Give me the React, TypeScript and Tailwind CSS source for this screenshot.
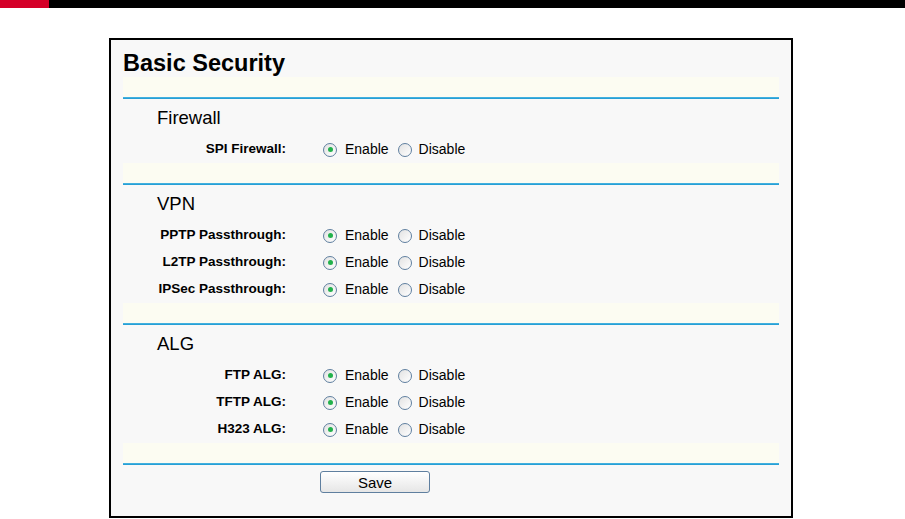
import React from 'react'

const sections = [
  { title: 'Firewall', rows: ['SPI Firewall:'] },
  { title: 'VPN', rows: ['PPTP Passthrough:', 'L2TP Passthrough:', 'IPSec Passthrough:'] },
  { title: 'ALG', rows: ['FTP ALG:', 'TFTP ALG:', 'H323 ALG:'] },
]

function Radio({ checked }: { checked?: boolean }) {
  return (
    <span className="w-[14px] h-[14px] rounded-full border border-[#5f7f9f] bg-gradient-to-br from-[#e2e2e2] to-white flex items-center justify-center shrink-0">
      {checked && <span className="w-[5px] h-[5px] rounded-full bg-[#22b14c]" />}
    </span>
  )
}

function Divider() {
  return (
    <div>
      <div className="h-[20px] bg-[#fcfcf2]" />
      <div className="h-[2px] bg-gradient-to-b from-[#4cb8e4] to-[#1597cf]" />
    </div>
  )
}

export default function App() {
  return (
    <div className="w-[905px] h-[519px] bg-white font-['Liberation_Sans',Arial,sans-serif] text-black overflow-hidden">
      <div className="flex h-[8px]">
        <div className="w-[49px] bg-[#d50028]" />
        <div className="flex-1 bg-black" />
      </div>

      <div className="ml-[109px] mt-[30px] w-[684px] h-[480px] border-2 border-black bg-[#f8f8f8] px-[12px]">
        <div className="h-[37px] pt-[10px] leading-[27px] text-[23.5px] font-bold">Basic Security</div>
        <Divider />

        {sections.map((s) => (
          <div key={s.title}>
            <div className="h-[37px] flex items-center pl-[34px] text-[18.5px]">{s.title}</div>
            {s.rows.map((r) => (
              <div key={r} className="h-[27px] flex items-center">
                <div className="w-[163px] text-right font-bold text-[13.5px]">{r}</div>
                <div className="ml-[37px] flex items-center text-[14px]">
                  <Radio checked />
                  <span className="ml-[8px]">Enable</span>
                  <span className="ml-[9px]"><Radio /></span>
                  <span className="ml-[7px]">Disable</span>
                </div>
              </div>
            ))}
            <Divider />
          </div>
        ))}

        <div className="flex pl-[197px] pt-[6px]">
          <button className="w-[110px] h-[22px] rounded-[3px] border border-[#5f7f9f] bg-gradient-to-b from-white to-[#e6e6e6] text-[15px] leading-none">
            Save
          </button>
        </div>
      </div>
    </div>
  )
}
